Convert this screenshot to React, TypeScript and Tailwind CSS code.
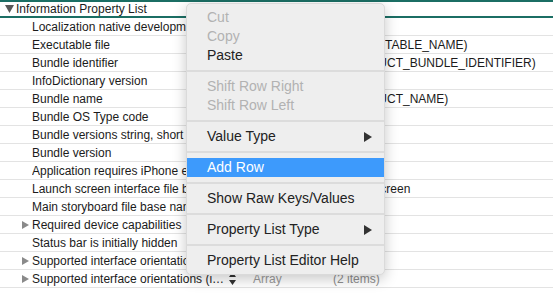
const rows = [
  { key: "Localization native development region", type: "String", value: "en" },
  { key: "Executable file", type: "String", value: "$(EXECUTABLE_NAME)" },
  { key: "Bundle identifier", type: "String", value: "$(PRODUCT_BUNDLE_IDENTIFIER)" },
  { key: "InfoDictionary version", type: "String", value: "6.0" },
  { key: "Bundle name", type: "String", value: "$(PRODUCT_NAME)" },
  { key: "Bundle OS Type code", type: "String", value: "APPL" },
  { key: "Bundle versions string, short", type: "String", value: "1.0" },
  { key: "Bundle version", type: "String", value: "1" },
  { key: "Application requires iPhone environment", type: "Boolean", value: "YES" },
  { key: "Launch screen interface file base name", type: "String", value: "LaunchScreen" },
  { key: "Main storyboard file base name", type: "String", value: "Main" },
  { key: "Required device capabilities", type: "Array", value: "(1 item)", group: true },
  { key: "Status bar is initially hidden", type: "Boolean", value: "NO" },
  { key: "Supported interface orientations", type: "Array", value: "(3 items)", group: true },
  { key: "Supported interface orientations (iPad)", type: "Array", value: "(2 items)", group: true, active: true },
];

const menu: ({ label: string; disabled?: boolean; sub?: boolean; hi?: boolean } | null)[] = [
  { label: "Cut", disabled: true },
  { label: "Copy", disabled: true },
  { label: "Paste" },
  null,
  { label: "Shift Row Right", disabled: true },
  { label: "Shift Row Left", disabled: true },
  null,
  { label: "Value Type", sub: true },
  null,
  { label: "Add Row", hi: true },
  null,
  { label: "Show Raw Keys/Values" },
  null,
  { label: "Property List Type", sub: true },
  null,
  { label: "Property List Editor Help" },
];

function RightTri({ className }: { className: string }) {
  return (
    <svg width="7" height="8" viewBox="0 0 7 8" className={className}>
      <path d="M0 0 L7 4 L0 8 Z" fill="currentColor" />
    </svg>
  );
}

export default function App() {
  return (
    <div className="relative w-[553px] h-[295px] overflow-hidden bg-white font-['Liberation_Sans',Arial,sans-serif] text-[12px] text-[#1b1b1b]">
      <div className="flex flex-col">
        <div className="h-[18px] border-y-2 border-[#1b6e64] flex items-center">
          <svg width="9" height="8" viewBox="0 0 9 8" className="ml-[5px] mr-[2px] text-[#585858]">
            <path d="M0 0 L9 0 L4.5 8 Z" fill="currentColor" />
          </svg>
          <span>Information Property List</span>
        </div>
        {rows.map((r) => (
          <div key={r.key} className="h-[18px] border-b border-[#e3e3e3] flex items-center">
            <div className="w-[22px] shrink-0" />
            <div className="w-[10px] shrink-0">
              {r.group && <RightTri className="text-[#8a8a8a]" />}
            </div>
            <div className="w-[204px] shrink-0 flex items-center">
              <span className="truncate w-[195px]">{r.key}</span>
              {r.active && (
                <svg width="7" height="13" viewBox="0 0 7 13" className="ml-[2px] text-[#333]">
                  <path d="M0 5 L3.5 0 L7 5 Z M0 8 L3.5 13 L7 8 Z" fill="currentColor" />
                </svg>
              )}
            </div>
            <span className={`w-[80px] ml-[17px] shrink-0 ${r.active ? "text-[#9a9a9a]" : "text-[#1b1b1b]"}`}>{r.type}</span>
            <span className={`whitespace-nowrap ${r.group ? "text-[#8e8e8e]" : ""}`}>{r.value}</span>
          </div>
        ))}
      </div>

      <div className="absolute left-[186px] top-[3px] w-[199px] rounded-[5px] bg-[#eeeeee] border border-[#dadada] shadow-[0_4px_14px_rgba(0,0,0,0.22)] py-[4px] text-[14px]">
        {menu.map((m, i) =>
          m === null ? (
            <div key={i} className="h-[12px] flex items-center">
              <div className="h-[2px] w-full bg-[#dcdcdc]" />
            </div>
          ) : (
            <div
              key={i}
              className={`h-[19px] flex items-center pl-[20px] pr-[12px] ${
                m.hi ? "bg-[#3d9afc] text-white" : m.disabled ? "text-[#b2b2b2]" : "text-[#222]"
              }`}
            >
              <span className="flex-1">{m.label}</span>
              {m.sub && (
                <svg width="8" height="10" viewBox="0 0 8 10" className="text-[#333]">
                  <path d="M0 0 L8 5 L0 10 Z" fill="currentColor" />
                </svg>
              )}
            </div>
          )
        )}
      </div>
    </div>
  );
}
